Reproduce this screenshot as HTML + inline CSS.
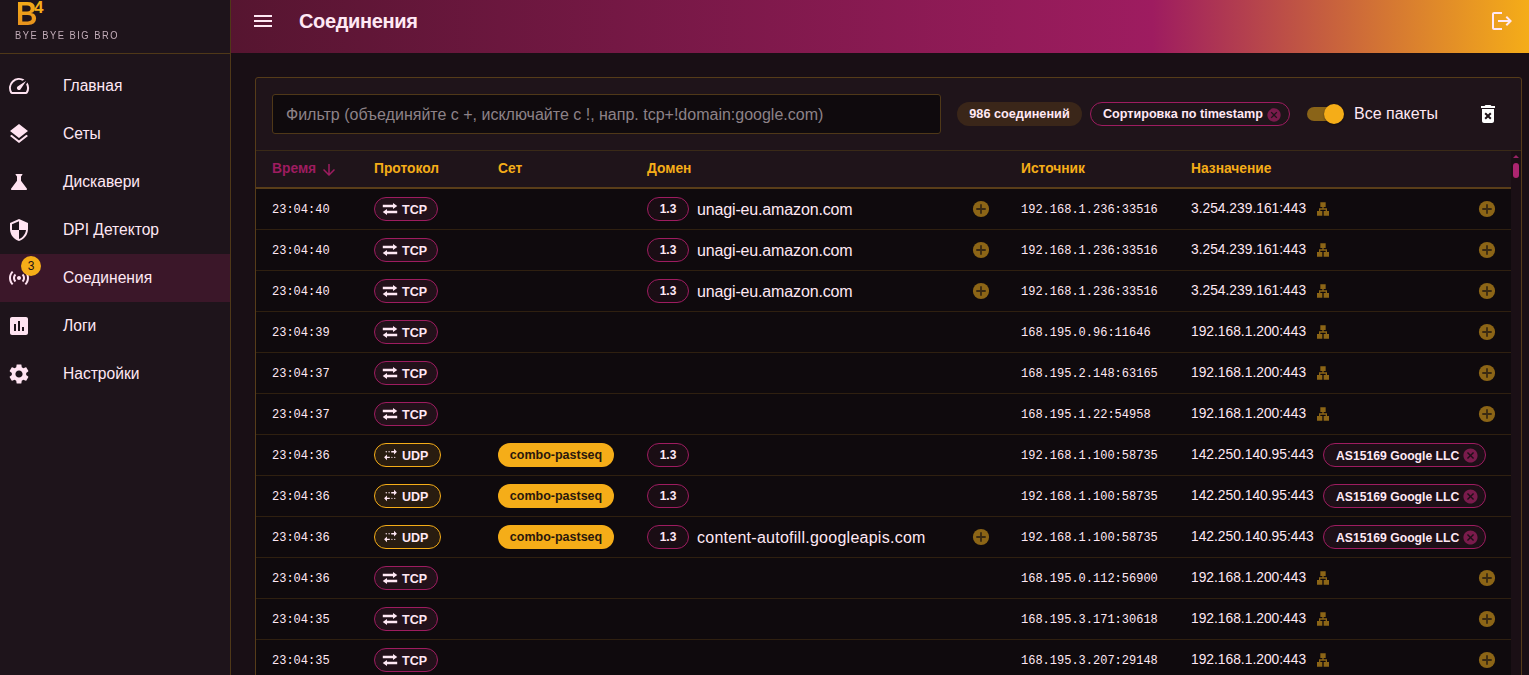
<!DOCTYPE html>
<html><head><meta charset="utf-8">
<style>
*{box-sizing:border-box;margin:0;padding:0}
html,body{width:1529px;height:675px;overflow:hidden;background:#190f15;font-family:"Liberation Sans",sans-serif;color:#ffe8f4}
svg{display:block;fill:currentColor}
#side{position:absolute;left:0;top:0;width:231px;height:675px;background:#1e141b;border-right:1px solid #4f3818}
#logo{position:absolute;left:0;top:0;width:230px;height:54px;border-bottom:1px solid #4f3818}
#b4{position:absolute;left:16px;top:-2px;font-size:33px;line-height:32px;transform:scaleX(0.9);transform-origin:0 0;font-weight:bold;color:#F5AD18;background:linear-gradient(180deg,#F5AD18,#E58E1E);-webkit-background-clip:text;background-clip:text;-webkit-text-fill-color:transparent}
#b4s{position:absolute;left:34px;top:-1px;font-size:17px;line-height:17px;font-weight:bold;color:#F5AD18}
#bbbb{position:absolute;left:15px;top:29px;font-size:11px;line-height:12px;letter-spacing:1.75px;transform:scaleX(0.85);transform-origin:0 0;color:#c3adb9;white-space:nowrap}
.nav{position:absolute;left:0;width:230px;height:48px}
.nav .t{position:absolute;left:63px;top:15px;font-size:15.6px;line-height:18px;color:#ffe8f4;white-space:nowrap}
.nav svg{position:absolute;color:#ffe3f1}
.nav.act{background:#3b1729}
#badge{position:absolute;left:21px;top:2px;width:20px;height:20px;border-radius:10px;background:#F5AD18;color:#1a1116;font-size:12px;line-height:20px;text-align:center}
#hdr{position:absolute;left:231px;top:0;width:1298px;height:53px;background:linear-gradient(90deg,#561530 0%,#9E1C60 71%,#F5AD18 100%)}
#menu{position:absolute;left:251px;top:9px;width:24px;height:24px;color:#ffe8f4}
#title{position:absolute;left:299px;top:11px;font-size:20px;line-height:20px;letter-spacing:-0.35px;font-weight:bold;color:#ffe8f4;white-space:nowrap}
#logout{position:absolute;left:1490px;top:9px;width:24px;height:24px;color:#ffe8f4}
#card{position:absolute;left:255px;top:77px;width:1267px;height:640px;background:#1f141a;border:1px solid #563c19;border-radius:3px}
#filter{position:absolute;left:272px;top:94px;width:669px;height:40px;background:#0f0a0d;border:1px solid #4f3818;border-radius:3px}
#filter span{position:absolute;left:13px;top:11px;font-size:16px;line-height:18px;color:#8d8288;white-space:nowrap}
#cnt{position:absolute;left:957px;top:102px;width:125px;height:24px;border-radius:12px;background:#3a2619;font-size:12.7px;line-height:24px;font-weight:bold;text-align:center;color:#ffe8f4;white-space:nowrap}
#sort{position:absolute;left:1090px;top:102px;width:200px;height:24px;border-radius:12px;border:1px solid #9E1C60;background:#1f141a;font-size:12.6px;line-height:22px;font-weight:bold;color:#ffe8f4;white-space:nowrap}
#sort b{position:absolute;left:12px;top:0}
#sort svg{position:absolute;left:175px;top:4px;width:16px;height:16px;color:#7a1b4c}
#track{position:absolute;left:1307px;top:107px;width:34px;height:14px;border-radius:7px;background:#8a6418}
#thumb{position:absolute;left:1324px;top:104px;width:20px;height:20px;border-radius:10px;background:#F5AD18;box-shadow:0 1px 2px rgba(0,0,0,.4)}
#allp{position:absolute;left:1354px;top:105px;font-size:16px;line-height:18px;color:#ffe8f4;white-space:nowrap}
#trash{position:absolute;left:1476px;top:102px;width:24px;height:24px;color:#ffffff}
#thead{position:absolute;left:256px;top:150px;width:1255px;height:39px;background:#1f141a;border-top:1px solid #3a2a17;border-bottom:2px solid #5a3e19}
#thead span{position:absolute;top:10px;font-size:13.8px;line-height:16px;font-weight:bold;color:#F5AD18;white-space:nowrap}
#thead span.m{color:#9E1C60}
#thead svg{position:absolute;left:64px;top:10px;width:18px;height:18px;color:#9E1C60}
#sbar{position:absolute;left:1511px;top:151px;width:10px;height:524px;background:#1a0f15}
#sthumb{position:absolute;left:1513px;top:163px;width:6px;height:15px;border-radius:3px;background:#ac2570}
#tline{position:absolute;left:256px;top:150px;width:1265px;height:1px;background:#3a2a17}
#sarrow{position:absolute;left:1512.5px;top:154.5px;width:0;height:0;border-left:3.5px solid transparent;border-right:3.5px solid transparent;border-bottom:3.5px solid #9a2266}
.row{position:absolute;left:256px;width:1255px;height:41px;background:#0f0a0d;border-bottom:1px solid #2f2010}
.row>*{position:absolute;white-space:nowrap}
.tm{left:16px;top:14px;font-family:"Liberation Mono",monospace;font-size:12px;line-height:14px;color:#ffe8f4}
.pc{left:118px;top:8px;width:64px;height:24px;border-radius:12px;border:1px solid #9E1C60;background:#22111a}
.pc svg{position:absolute;left:7px;top:2px;width:17px;height:17px;color:#ffe8f4}
.pc.tcp svg{left:7px;top:4px;width:16px;height:14px}
.pc b{position:absolute;left:27px;top:5px;font-size:12.5px;line-height:15px;color:#ffe8f4}
.pc.udp{width:67px;border-color:#F5AD18;background:#281c10}
.setc{left:242px;top:8px;width:116px;height:24px;border-radius:12px;background:#F5AD18;color:#2a180c;font-size:12.5px;line-height:25px;text-align:center;font-weight:bold}
.tls{left:391px;top:8px;width:42px;height:24px;border-radius:12px;border:1px solid #9E1C60;background:#1a0d14;font-size:12px;line-height:23px;text-align:center;font-weight:bold;color:#ffe8f4}
.dom{left:441px;top:12px;font-size:16px;line-height:18px;color:#ffe8f4}
.add{left:715px;top:10px;width:20px;height:20px;color:#8c6516}
.add svg,.add2 svg,.lan svg{width:100%;height:100%}
.src{left:765px;top:14px;font-family:"Liberation Mono",monospace;font-size:12px;line-height:14px;color:#ffe8f4}
.dst{left:935px;top:12px;font-size:13.8px;line-height:16px;color:#ffe8f4}
.lan{left:1059px;top:12px;width:16px;height:16px;color:#8c6516}
.add2{left:1221px;top:10px;width:20px;height:20px;color:#8c6516}
.asn{left:1067px;top:8px;width:163px;height:24px;border-radius:12px;border:1px solid #9E1C60;background:#1d0f17}
.asn b{position:absolute;left:12px;top:5px;font-size:12.2px;line-height:15px;color:#ffe8f4}
.asn svg{position:absolute;left:138px;top:3px;width:17px;height:17px;color:#7a1b4c}
</style></head><body>
<div id="side">
  <div id="logo"><span id="b4">B</span><span id="b4s">4</span><span id="bbbb">BYE BYE BIG BRO</span></div>
  <div class="nav" style="top:62px"><svg style="left:7px;top:12px;width:24px;height:24px" viewBox="0 0 24 24"><path d="M20.38 8.57l-1.23 1.85a8 8 0 0 1-.22 7.58H5.07A8 8 0 0 1 15.58 6.85l1.85-1.23A10 10 0 0 0 3.35 19a2 2 0 0 0 1.72 1h13.85a2 2 0 0 0 1.74-1 10 10 0 0 0-.27-10.44zm-9.79 6.84a2 2 0 0 0 2.83 0l5.66-8.49-8.49 5.66a2 2 0 0 0 0 2.83z"/></svg><span class="t">Главная</span></div>
  <div class="nav" style="top:110px"><svg style="left:7px;top:12px;width:24px;height:24px" viewBox="0 0 24 24"><path d="M11.99 18.54l-7.37-5.73L3 14.07l9 7 9-7-1.63-1.27-7.38 5.74zM12 16l7.36-5.73L21 9l-9-7-9 7 1.63 1.27L12 16z"/></svg><span class="t">Сеты</span></div>
  <div class="nav" style="top:158px"><svg style="left:7px;top:12px;width:24px;height:24px" viewBox="0 0 24 24"><path d="M19.8 18.4L14 10.67V6.5l1.35-1.69c.26-.33.03-.81-.39-.81H9.04c-.42 0-.65.48-.39.81L10 6.5v4.17L4.2 18.4c-.49.66-.02 1.6.8 1.6h14c.82 0 1.29-.94.8-1.6z"/></svg><span class="t">Дискавери</span></div>
  <div class="nav" style="top:206px"><svg style="left:7px;top:12px;width:24px;height:24px" viewBox="0 0 24 24"><path d="M12 1L3 5v6c0 5.55 3.84 10.74 9 12 5.16-1.26 9-6.45 9-12V5l-9-4zm0 10.99h7c-.53 4.12-3.28 7.79-7 8.94V12H5V6.3l7-3.11v8.8z"/></svg><span class="t">DPI Детектор</span></div>
  <div class="nav act" style="top:254px"><svg style="left:7px;top:12px;width:24px;height:24px" viewBox="0 0 24 24"><path d="M7.76 16.24C6.67 15.16 6 13.66 6 12s.67-3.16 1.76-4.24l1.42 1.42C8.45 9.9 8 10.9 8 12c0 1.1.45 2.1 1.17 2.83l-1.41 1.41zm8.48 0C17.33 15.160 18 13.66 18 12s-.67-3.16-1.76-4.240l-1.42 1.42C15.55 9.9 16 10.9 16 12c0 1.1-.45 2.1-1.17 2.83l1.41 1.41zM12 10c-1.1 0-2 .9-2 2s.9 2 2 2 2-.9 2-2-.9-2-2-2zm8 2c0 2.21-.9 4.21-2.35 5.65l1.42 1.42C20.88 17.26 22 14.76 22 12s-1.12-5.26-2.93-7.07l-1.42 1.42C19.1 7.79 20 9.79 20 12zM6.35 6.35L4.93 4.93C3.12 6.74 2 9.240 2 12s1.12 5.26 2.93 7.07l1.42-1.42C4.9 16.21 4 14.21 4 12s.9-4.21 2.35-5.65z"/></svg><span id="badge">3</span><span class="t">Соединения</span></div>
  <div class="nav" style="top:302px"><svg style="left:7px;top:12px;width:24px;height:24px" viewBox="0 0 24 24"><path d="M19 3H5c-1.1 0-2 .9-2 2v14c0 1.1.9 2 2 2h14c1.1 0 2-.9 2-2V5c0-1.1-.9-2-2-2zM9 17H7v-7h2v7zm4 0h-2V7h2v10zm4 0h-2v-4h2v4z"/></svg><span class="t">Логи</span></div>
  <div class="nav" style="top:350px"><svg style="left:7px;top:12px;width:24px;height:24px" viewBox="0 0 24 24"><path d="M19.14 12.94c.04-.3.06-.61.06-.94 0-.32-.02-.64-.07-.94l2.030-1.58c.18-.14.23-.41.12-.61l-1.92-3.32c-.12-.22-.37-.29-.59-.22l-2.39.96c-.5-.38-1.030-.7-1.62-.94l-.36-2.54c-.04-.24-.24-.41-.48-.41h-3.84c-.24 0-.43.17-.47.41l-.36 2.54c-.59.24-1.13.57-1.62.94l-2.39-.96c-.22-.08-.47 0-.59.22L2.74 8.87c-.12.21-.08.47.12.61l2.03 1.58c-.05.3-.09.63-.09.94s.02.64.07.94l-2.03 1.58c-.18.14-.23.41-.12.61l1.92 3.32c.12.22.37.29.59.22l2.39-.96c.5.38 1.03.7 1.62.94l.36 2.54c.05.24.24.41.48.41h3.84c.24 0 .44-.17.47-.41l.36-2.54c.59-.24 1.13-.56 1.62-.94l2.39.96c.22.08.47 0 .59-.22l1.92-3.32c.12-.22.07-.47-.12-.61l-2.01-1.58zM12 15.6c-1.98 0-3.6-1.62-3.6-3.6s1.62-3.6 3.6-3.6 3.6 1.62 3.6 3.6-1.62 3.6-3.6 3.6z"/></svg><span class="t">Настройки</span></div>
</div>
<div id="hdr"></div>
<svg id="menu" viewBox="0 0 24 24"><path d="M3 18h18v-2H3v2zm0-5h18v-2H3v2zm0-7v2h18V6H3z"/></svg>
<span id="title">Соединения</span>
<svg id="logout" viewBox="0 0 24 24"><path d="M17 7l-1.41 1.41L18.17 11H8v2h10.17l-2.58 2.58L17 17l5-5zM4 5h8V3H4c-1.1 0-2 .9-2 2v14c0 1.1.9 2 2 2h8v-2H4V5z"/></svg>
<div id="card"></div>
<div id="filter"><span>Фильтр (объединяйте с +, исключайте с !, напр. tcp+!domain:google.com)</span></div>
<div id="cnt">986 соединений</div>
<div id="sort"><b>Сортировка по timestamp</b><svg viewBox="0 0 24 24"><path d="M12 2C6.47 2 2 6.47 2 12s4.47 10 10 10 10-4.47 10-10S17.53 2 12 2zm5 13.59L15.59 17 12 13.41 8.41 17 7 15.59 10.59 12 7 8.41 8.41 7 12 10.59 15.59 7 17 8.41 13.41 12 17 15.59z"/></svg></div>
<div id="track"></div><div id="thumb"></div>
<span id="allp">Все пакеты</span>
<svg id="trash" viewBox="0 0 24 24"><path d="M6 19c0 1.1.9 2 2 2h8c1.1 0 2-.9 2-2V7H6v12zm2.46-7.12l1.41-1.41L12 12.59l2.12-2.12 1.41 1.41L13.41 14l2.12 2.12-1.41 1.41L12 15.41l-2.12 2.12-1.41-1.41L10.59 14l-2.13-2.12zM15.5 4l-1-1h-5l-1 1H5v2h14V4z"/></svg>
<div id="thead">
  <span class="m" style="left:16px">Время</span><svg viewBox="0 0 24 24"><path d="M20 12l-1.41-1.41L13 16.17V4h-2v12.17l-5.58-5.59L4 12l8 8 8-8z"/></svg>
  <span style="left:118px">Протокол</span>
  <span style="left:242px">Сет</span>
  <span style="left:391px">Домен</span>
  <span style="left:765px">Источник</span>
  <span style="left:935px">Назначение</span>
</div>
<div class="row" style="top:189px"><span class="tm">23:04:40</span><span class="pc tcp"><svg viewBox="0 0 16 14"><path d="M0.8 2.8H11V1.1L15.3 4 11 6.9V5.2H0.8z M15.2 8.8H5V7.1L0.7 10 5 12.9V11.2H15.2z"/></svg><b>TCP</b></span><span class="tls">1.3</span><span class="dom" style="letter-spacing:-0.15px">unagi-eu.amazon.com</span><span class="add"><svg viewBox="0 0 20 20"><circle cx="10" cy="10" r="8.1" fill="#8c6516"/><path fill="#3a2a12" d="M5.3 9.1h9.4v1.8H5.3zM9.1 5.3h1.8v9.4H9.1z"/></svg></span><span class="src">192.168.1.236:33516</span><span class="dst">3.254.239.161:443</span><span class="lan"><svg viewBox="0 0 24 24"><path d="M13 22h8v-7h-3v-4h-5V9h3V2H8v7h3v2H6v4H3v7h8v-7H8v-2h8v2h-3z"/></svg></span><span class="add2"><svg viewBox="0 0 20 20"><circle cx="10" cy="10" r="8.1" fill="#8c6516"/><path fill="#3a2a12" d="M5.3 9.1h9.4v1.8H5.3zM9.1 5.3h1.8v9.4H9.1z"/></svg></span></div>
<div class="row" style="top:230px"><span class="tm">23:04:40</span><span class="pc tcp"><svg viewBox="0 0 16 14"><path d="M0.8 2.8H11V1.1L15.3 4 11 6.9V5.2H0.8z M15.2 8.8H5V7.1L0.7 10 5 12.9V11.2H15.2z"/></svg><b>TCP</b></span><span class="tls">1.3</span><span class="dom" style="letter-spacing:-0.15px">unagi-eu.amazon.com</span><span class="add"><svg viewBox="0 0 20 20"><circle cx="10" cy="10" r="8.1" fill="#8c6516"/><path fill="#3a2a12" d="M5.3 9.1h9.4v1.8H5.3zM9.1 5.3h1.8v9.4H9.1z"/></svg></span><span class="src">192.168.1.236:33516</span><span class="dst">3.254.239.161:443</span><span class="lan"><svg viewBox="0 0 24 24"><path d="M13 22h8v-7h-3v-4h-5V9h3V2H8v7h3v2H6v4H3v7h8v-7H8v-2h8v2h-3z"/></svg></span><span class="add2"><svg viewBox="0 0 20 20"><circle cx="10" cy="10" r="8.1" fill="#8c6516"/><path fill="#3a2a12" d="M5.3 9.1h9.4v1.8H5.3zM9.1 5.3h1.8v9.4H9.1z"/></svg></span></div>
<div class="row" style="top:271px"><span class="tm">23:04:40</span><span class="pc tcp"><svg viewBox="0 0 16 14"><path d="M0.8 2.8H11V1.1L15.3 4 11 6.9V5.2H0.8z M15.2 8.8H5V7.1L0.7 10 5 12.9V11.2H15.2z"/></svg><b>TCP</b></span><span class="tls">1.3</span><span class="dom" style="letter-spacing:-0.15px">unagi-eu.amazon.com</span><span class="add"><svg viewBox="0 0 20 20"><circle cx="10" cy="10" r="8.1" fill="#8c6516"/><path fill="#3a2a12" d="M5.3 9.1h9.4v1.8H5.3zM9.1 5.3h1.8v9.4H9.1z"/></svg></span><span class="src">192.168.1.236:33516</span><span class="dst">3.254.239.161:443</span><span class="lan"><svg viewBox="0 0 24 24"><path d="M13 22h8v-7h-3v-4h-5V9h3V2H8v7h3v2H6v4H3v7h8v-7H8v-2h8v2h-3z"/></svg></span><span class="add2"><svg viewBox="0 0 20 20"><circle cx="10" cy="10" r="8.1" fill="#8c6516"/><path fill="#3a2a12" d="M5.3 9.1h9.4v1.8H5.3zM9.1 5.3h1.8v9.4H9.1z"/></svg></span></div>
<div class="row" style="top:312px"><span class="tm">23:04:39</span><span class="pc tcp"><svg viewBox="0 0 16 14"><path d="M0.8 2.8H11V1.1L15.3 4 11 6.9V5.2H0.8z M15.2 8.8H5V7.1L0.7 10 5 12.9V11.2H15.2z"/></svg><b>TCP</b></span><span class="src">168.195.0.96:11646</span><span class="dst">192.168.1.200:443</span><span class="lan"><svg viewBox="0 0 24 24"><path d="M13 22h8v-7h-3v-4h-5V9h3V2H8v7h3v2H6v4H3v7h8v-7H8v-2h8v2h-3z"/></svg></span><span class="add2"><svg viewBox="0 0 20 20"><circle cx="10" cy="10" r="8.1" fill="#8c6516"/><path fill="#3a2a12" d="M5.3 9.1h9.4v1.8H5.3zM9.1 5.3h1.8v9.4H9.1z"/></svg></span></div>
<div class="row" style="top:353px"><span class="tm">23:04:37</span><span class="pc tcp"><svg viewBox="0 0 16 14"><path d="M0.8 2.8H11V1.1L15.3 4 11 6.9V5.2H0.8z M15.2 8.8H5V7.1L0.7 10 5 12.9V11.2H15.2z"/></svg><b>TCP</b></span><span class="src">168.195.2.148:63165</span><span class="dst">192.168.1.200:443</span><span class="lan"><svg viewBox="0 0 24 24"><path d="M13 22h8v-7h-3v-4h-5V9h3V2H8v7h3v2H6v4H3v7h8v-7H8v-2h8v2h-3z"/></svg></span><span class="add2"><svg viewBox="0 0 20 20"><circle cx="10" cy="10" r="8.1" fill="#8c6516"/><path fill="#3a2a12" d="M5.3 9.1h9.4v1.8H5.3zM9.1 5.3h1.8v9.4H9.1z"/></svg></span></div>
<div class="row" style="top:394px"><span class="tm">23:04:37</span><span class="pc tcp"><svg viewBox="0 0 16 14"><path d="M0.8 2.8H11V1.1L15.3 4 11 6.9V5.2H0.8z M15.2 8.8H5V7.1L0.7 10 5 12.9V11.2H15.2z"/></svg><b>TCP</b></span><span class="src">168.195.1.22:54958</span><span class="dst">192.168.1.200:443</span><span class="lan"><svg viewBox="0 0 24 24"><path d="M13 22h8v-7h-3v-4h-5V9h3V2H8v7h3v2H6v4H3v7h8v-7H8v-2h8v2h-3z"/></svg></span><span class="add2"><svg viewBox="0 0 20 20"><circle cx="10" cy="10" r="8.1" fill="#8c6516"/><path fill="#3a2a12" d="M5.3 9.1h9.4v1.8H5.3zM9.1 5.3h1.8v9.4H9.1z"/></svg></span></div>
<div class="row" style="top:435px"><span class="tm">23:04:36</span><span class="pc udp"><svg viewBox="0 0 24 24"><path d="M17 4l4 4-4 4V9h-4V7h4V4zm-7 3c-.55 0-1 .45-1 1s.45 1 1 1 1-.45 1-1-.45-1-1-1zm-4 0c-.55 0-1 .45-1 1s.45 1 1 1 1-.45 1-1-.45-1-1-1zm1 10h4v-2H7v-3l-4 4 4 4v-3zm7 0c.55 0 1-.45 1-1s-.45-1-1-1-1 .45-1 1 .45 1 1 1zm4 0c.55 0 1-.45 1-1s-.45-1-1-1-1 .45-1 1 .45 1 1 1z"/></svg><b>UDP</b></span><span class="setc">combo-pastseq</span><span class="tls">1.3</span><span class="src">192.168.1.100:58735</span><span class="dst">142.250.140.95:443</span><span class="asn"><b>AS15169 Google LLC</b><svg viewBox="0 0 24 24"><path d="M12 2C6.47 2 2 6.47 2 12s4.47 10 10 10 10-4.47 10-10S17.53 2 12 2zm5 13.59L15.59 17 12 13.41 8.41 17 7 15.59 10.59 12 7 8.41 8.41 7 12 10.59 15.59 7 17 8.41 13.41 12 17 15.59z"/></svg></span></div>
<div class="row" style="top:476px"><span class="tm">23:04:36</span><span class="pc udp"><svg viewBox="0 0 24 24"><path d="M17 4l4 4-4 4V9h-4V7h4V4zm-7 3c-.55 0-1 .45-1 1s.45 1 1 1 1-.45 1-1-.45-1-1-1zm-4 0c-.55 0-1 .45-1 1s.45 1 1 1 1-.45 1-1-.45-1-1-1zm1 10h4v-2H7v-3l-4 4 4 4v-3zm7 0c.55 0 1-.45 1-1s-.45-1-1-1-1 .45-1 1 .45 1 1 1zm4 0c.55 0 1-.45 1-1s-.45-1-1-1-1 .45-1 1 .45 1 1 1z"/></svg><b>UDP</b></span><span class="setc">combo-pastseq</span><span class="tls">1.3</span><span class="src">192.168.1.100:58735</span><span class="dst">142.250.140.95:443</span><span class="asn"><b>AS15169 Google LLC</b><svg viewBox="0 0 24 24"><path d="M12 2C6.47 2 2 6.47 2 12s4.47 10 10 10 10-4.47 10-10S17.53 2 12 2zm5 13.59L15.59 17 12 13.41 8.41 17 7 15.59 10.59 12 7 8.41 8.41 7 12 10.59 15.59 7 17 8.41 13.41 12 17 15.59z"/></svg></span></div>
<div class="row" style="top:517px"><span class="tm">23:04:36</span><span class="pc udp"><svg viewBox="0 0 24 24"><path d="M17 4l4 4-4 4V9h-4V7h4V4zm-7 3c-.55 0-1 .45-1 1s.45 1 1 1 1-.45 1-1-.45-1-1-1zm-4 0c-.55 0-1 .45-1 1s.45 1 1 1 1-.45 1-1-.45-1-1-1zm1 10h4v-2H7v-3l-4 4 4 4v-3zm7 0c.55 0 1-.45 1-1s-.45-1-1-1-1 .45-1 1 .45 1 1 1zm4 0c.55 0 1-.45 1-1s-.45-1-1-1-1 .45-1 1 .45 1 1 1z"/></svg><b>UDP</b></span><span class="setc">combo-pastseq</span><span class="tls">1.3</span><span class="dom" style="letter-spacing:0.26px">content-autofill.googleapis.com</span><span class="add"><svg viewBox="0 0 20 20"><circle cx="10" cy="10" r="8.1" fill="#8c6516"/><path fill="#3a2a12" d="M5.3 9.1h9.4v1.8H5.3zM9.1 5.3h1.8v9.4H9.1z"/></svg></span><span class="src">192.168.1.100:58735</span><span class="dst">142.250.140.95:443</span><span class="asn"><b>AS15169 Google LLC</b><svg viewBox="0 0 24 24"><path d="M12 2C6.47 2 2 6.47 2 12s4.47 10 10 10 10-4.47 10-10S17.53 2 12 2zm5 13.59L15.59 17 12 13.41 8.41 17 7 15.59 10.59 12 7 8.41 8.41 7 12 10.59 15.59 7 17 8.41 13.41 12 17 15.59z"/></svg></span></div>
<div class="row" style="top:558px"><span class="tm">23:04:36</span><span class="pc tcp"><svg viewBox="0 0 16 14"><path d="M0.8 2.8H11V1.1L15.3 4 11 6.9V5.2H0.8z M15.2 8.8H5V7.1L0.7 10 5 12.9V11.2H15.2z"/></svg><b>TCP</b></span><span class="src">168.195.0.112:56900</span><span class="dst">192.168.1.200:443</span><span class="lan"><svg viewBox="0 0 24 24"><path d="M13 22h8v-7h-3v-4h-5V9h3V2H8v7h3v2H6v4H3v7h8v-7H8v-2h8v2h-3z"/></svg></span><span class="add2"><svg viewBox="0 0 20 20"><circle cx="10" cy="10" r="8.1" fill="#8c6516"/><path fill="#3a2a12" d="M5.3 9.1h9.4v1.8H5.3zM9.1 5.3h1.8v9.4H9.1z"/></svg></span></div>
<div class="row" style="top:599px"><span class="tm">23:04:35</span><span class="pc tcp"><svg viewBox="0 0 16 14"><path d="M0.8 2.8H11V1.1L15.3 4 11 6.9V5.2H0.8z M15.2 8.8H5V7.1L0.7 10 5 12.9V11.2H15.2z"/></svg><b>TCP</b></span><span class="src">168.195.3.171:30618</span><span class="dst">192.168.1.200:443</span><span class="lan"><svg viewBox="0 0 24 24"><path d="M13 22h8v-7h-3v-4h-5V9h3V2H8v7h3v2H6v4H3v7h8v-7H8v-2h8v2h-3z"/></svg></span><span class="add2"><svg viewBox="0 0 20 20"><circle cx="10" cy="10" r="8.1" fill="#8c6516"/><path fill="#3a2a12" d="M5.3 9.1h9.4v1.8H5.3zM9.1 5.3h1.8v9.4H9.1z"/></svg></span></div>
<div class="row" style="top:640px"><span class="tm">23:04:35</span><span class="pc tcp"><svg viewBox="0 0 16 14"><path d="M0.8 2.8H11V1.1L15.3 4 11 6.9V5.2H0.8z M15.2 8.8H5V7.1L0.7 10 5 12.9V11.2H15.2z"/></svg><b>TCP</b></span><span class="src">168.195.3.207:29148</span><span class="dst">192.168.1.200:443</span><span class="lan"><svg viewBox="0 0 24 24"><path d="M13 22h8v-7h-3v-4h-5V9h3V2H8v7h3v2H6v4H3v7h8v-7H8v-2h8v2h-3z"/></svg></span><span class="add2"><svg viewBox="0 0 20 20"><circle cx="10" cy="10" r="8.1" fill="#8c6516"/><path fill="#3a2a12" d="M5.3 9.1h9.4v1.8H5.3zM9.1 5.3h1.8v9.4H9.1z"/></svg></span></div>
<div id="sbar"></div><div id="tline"></div><div id="sarrow"></div><div id="sthumb"></div>
</body></html>
